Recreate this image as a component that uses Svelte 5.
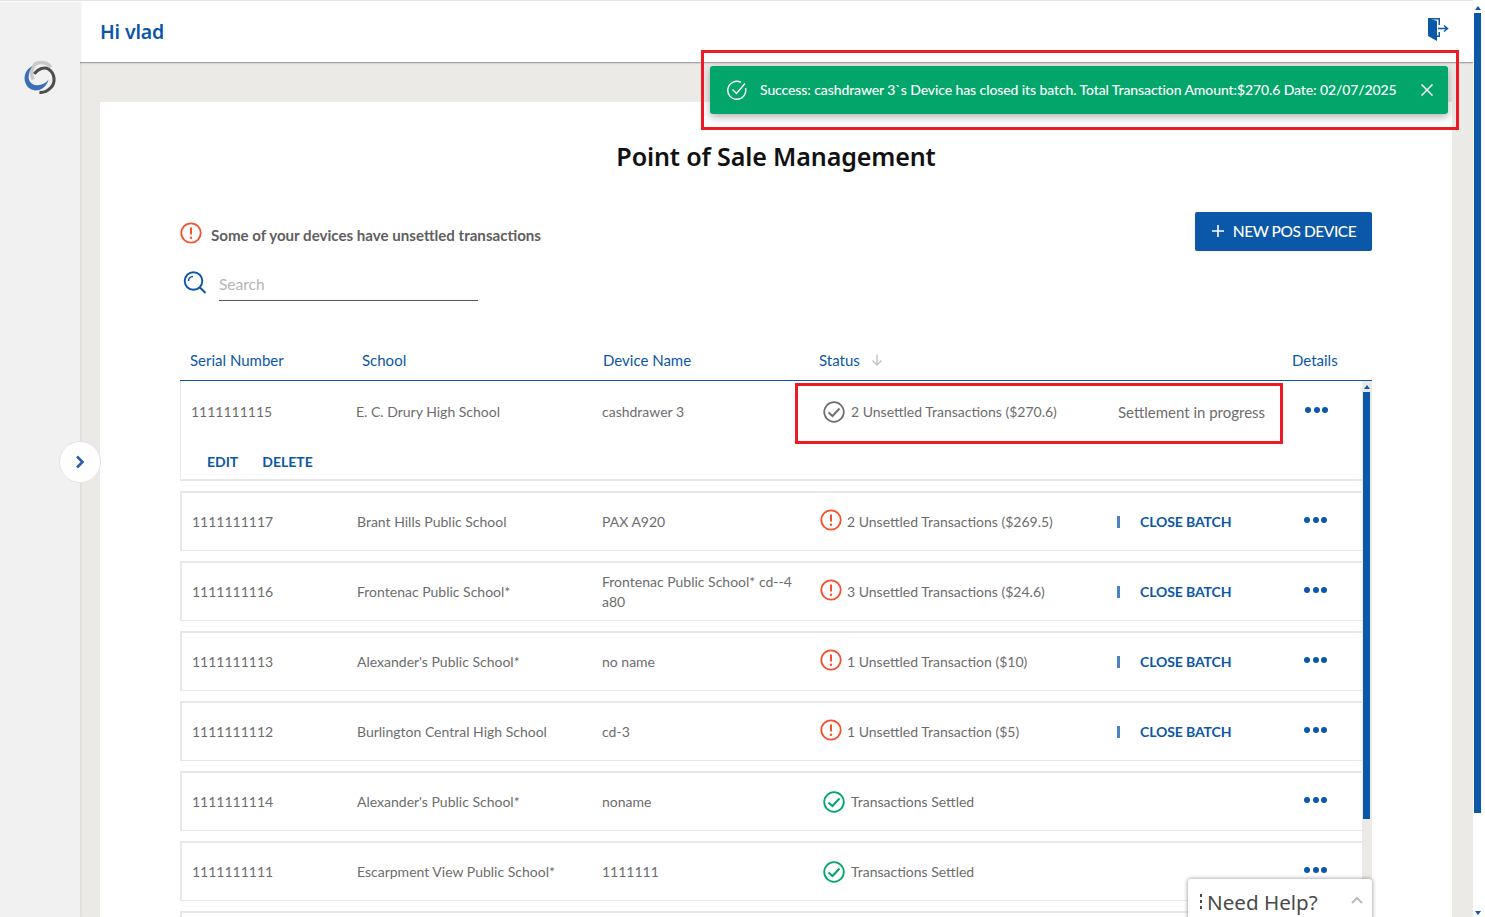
<script>
  const rows = [
    { serial: '1111111117', school: 'Brant Hills Public School', device: 'PAX A920', status: '2 Unsettled Transactions ($269.5)', batch: true },
    { serial: '1111111116', school: 'Frontenac Public School*', device: 'Frontenac Public School* cd--4 a80', status: '3 Unsettled Transactions ($24.6)', batch: true },
    { serial: '1111111113', school: "Alexander's Public School*", device: 'no name', status: '1 Unsettled Transaction ($10)', batch: true },
    { serial: '1111111112', school: 'Burlington Central High School', device: 'cd-3', status: '1 Unsettled Transaction ($5)', batch: true },
    { serial: '1111111114', school: "Alexander's Public School*", device: 'noname', status: 'Transactions Settled', batch: false },
    { serial: '1111111111', school: 'Escarpment View Public School*', device: '1111111', status: 'Transactions Settled', batch: false }
  ];
</script>

<div class="page">
  <aside class="side">
    <svg class="logo" viewBox="0 0 34 34" width="35" height="35" fill="none">
      <path d="M9 18C5 10 9 1.500 16 1.500C20 1.500 24 3 26 6" stroke="#c9c9c9" stroke-width="3.500" />
      <path d="M10 12.500C14 7 20 5.500 24 8C30 12 31 21 26 26C23 29 19 31 15 30.500" stroke="#4d4d4d" stroke-width="3" />
      <path d="M8 5C2 8 -0.500 14 1 20C3 27 8 29 13 28.500C18 28 22 24 24 18C21 22 16 24 12 23.500C8 23 4.500 20 4.500 16C4.500 12 6 8 8 5Z" fill="#3a6fb5" />
    </svg>
  </aside>

  <div class="main">
    <header class="top">
      <span class="hi">Hi vlad</span>
      <svg class="exit" viewBox="0 0 22 23" width="22" height="23">
        <path d="M1 0L10 3V23L1 18Z" fill="#0b57a8" />
        <path d="M1 0H13V7H11.500V1.500H1Z" fill="#0b57a8" />
        <path d="M11.500 14H13V19H10V17.500H11.500Z" fill="#0b57a8" />
        <path d="M11 10.500H20.500M17 7.500L20.500 10.500L17 13.500" fill="none" stroke="#0b57a8" stroke-width="1.500" />
      </svg>
    </header>

    <div class="body">
      <section class="card">
        <h1>Point of Sale Management</h1>

        <div class="tools">
          <div class="left-tools">
            <div class="warn-line">
              <svg class="alert" viewBox="0 0 22 22" width="22" height="22">
                <circle cx="11" cy="11" r="9.700" fill="none" stroke="#f4512c" stroke-width="1.800" />
                <path d="M11 5.500V12.500" stroke="#f4512c" stroke-width="2" />
                <circle cx="11" cy="15.800" r="1.200" fill="#f4512c" />
              </svg>
              <span>Some of your devices have unsettled transactions</span>
            </div>
            <div class="search">
              <svg viewBox="0 0 24 24" width="24" height="24" fill="none" stroke="#0b57a8">
                <circle cx="10.500" cy="10" r="8.800" stroke-width="1.900" />
                <path d="M5.500 10C5.500 7.500 7.500 5.500 10 5.500" stroke-width="1.600" />
                <path d="M17 16.500L22.500 22" stroke-width="2" />
              </svg>
              <div class="field">Search</div>
            </div>
          </div>
          <button class="new">
            <svg viewBox="0 0 14 14" width="14" height="14"><path d="M7 1V13M1 7H13" stroke="#fff" stroke-width="1.600" /></svg>
            <span>NEW POS DEVICE</span>
          </button>
        </div>

        <div class="head">
          <span class="h1">Serial Number</span>
          <span class="h2">School</span>
          <span class="h3">Device Name</span>
          <span class="h4">Status
            <svg viewBox="0 0 12 12" width="12" height="12" fill="none" stroke="#c4c4c4" stroke-width="1.400"><path d="M6 0.500V11M1.500 6.500L6 11L10.500 6.500" /></svg>
          </span>
          <span class="h5">Details</span>
        </div>

        <div class="list">
          <div class="rows">
            <div class="open">
              <div class="open-row">
                <span>1111111115</span>
                <span>E. C. Drury High School</span>
                <span>cashdrawer 3</span>
                <span class="st">
                  <svg viewBox="0 0 22 22" width="22" height="22" fill="none" stroke="#6f6f6f">
                    <circle cx="11" cy="11" r="9.800" stroke-width="1.700" />
                    <path d="M5.500 11.500L9.500 15L16.500 7.500" stroke-width="2" />
                  </svg>
                  2 Unsettled Transactions ($270.6)
                </span>
                <span class="prog">Settlement in progress</span>
                <span class="dots"><i></i><i></i><i></i></span>
              </div>
              <div class="acts"><span>EDIT</span><span>DELETE</span></div>
            </div>

            {#each rows as r}
              <div class="row">
                <span>{r.serial}</span>
                <span>{r.school}</span>
                <span class="dev">{r.device}</span>
                {#if r.batch}
                  <span class="st un">
                    <svg class="up" viewBox="0 0 22 22" width="22" height="22">
                      <circle cx="11" cy="11" r="9.700" fill="none" stroke="#f4512c" stroke-width="1.800" />
                      <path d="M11 5.500V12.500" stroke="#f4512c" stroke-width="2" />
                      <circle cx="11" cy="15.800" r="1.200" fill="#f4512c" />
                    </svg>
                    {r.status}
                  </span>
                  <span class="close"><b></b>CLOSE BATCH</span>
                {:else}
                  <span class="st ok">
                    <svg viewBox="0 0 22 22" width="22" height="22" fill="none" stroke="#03a66a">
                      <circle cx="11" cy="11" r="9.800" stroke-width="1.800" />
                      <path d="M5.500 11.500L9.500 15L16.500 7.500" stroke-width="2" />
                    </svg>
                    {r.status}
                  </span>
                  <span></span>
                {/if}
                <span class="dots"><i></i><i></i><i></i></span>
              </div>
            {/each}
            <div class="row stub"></div>
          </div>
          <div class="bar">
            <em></em>
            <u></u>
          </div>
        </div>
      </section>
    </div>
  </div>

  <div class="pagebar"><em></em><u></u><s></s></div>

  <div class="toast">
    <svg viewBox="0 0 20 20" width="20" height="20" fill="none" stroke="#fff" stroke-width="1.400">
      <path d="M14 2.300A9 9 0 1 0 18.500 8" />
      <path d="M5.500 9.500L9.500 13.500L18 3.500" />
    </svg>
    <span>Success: cashdrawer 3`s Device has closed its batch. Total Transaction Amount:$270.6 Date: 02/07/2025</span>
    <svg class="x" viewBox="0 0 12 12" width="12" height="12" stroke="#fff" stroke-width="1.500"><path d="M0.500 0.500L11.500 11.500M11.500 0.500L0.500 11.500" /></svg>
  </div>

  <div class="mark m1"></div>
  <div class="mark m2"></div>

  <button class="toggle" aria-label="expand">
    <svg viewBox="0 0 10 14" width="10" height="14" fill="none" stroke="#2b5fa8" stroke-width="2.600"><path d="M2 1.500L7.500 7L2 12.500" /></svg>
  </button>

  <div class="help">
    <span class="grip"><i></i><i></i><i></i></span>
    <span class="help-t">Need Help?</span>
    <svg viewBox="0 0 12 8" width="12" height="8" fill="none" stroke="#bdbdbd" stroke-width="2.200"><path d="M1 7L6 2L11 7" /></svg>
  </div>
</div>

<style>
  :global(body) { margin: 0; overflow: hidden; font-family: Lato, "Liberation Sans", sans-serif; }
  .page { position: relative; width: 1485px; height: 917px; overflow: hidden; display: flex; padding-top: 2px; box-sizing: border-box; background: #fff; }
  .page::before { content: ""; position: absolute; left: 0; top: 0; width: 1473px; height: 1px; background: #e6e6e6; }
  .side { width: 80px; flex: none; background: #f1f1f1; box-shadow: 1px 0 2px rgba(0,0,0,.08); z-index: 1; padding: 59px 0 0 24px; box-sizing: border-box; }
  .logo { display: block; overflow: visible; }
  .main { width: 1393px; flex: none; display: flex; flex-direction: column; background: #ebeae7; }
  .top { height: 61px; flex: none; box-sizing: border-box; background: #fff; border-bottom: 1px solid #a4a4a0; box-shadow: 0 1px 1px rgba(0,0,0,.08); display: flex; align-items: center; justify-content: space-between; padding: 0 24px 0 20px; }
  .hi { font-family: "Noto Sans", sans-serif; font-size: 19.5px; font-weight: 600; letter-spacing: -.15px; color: #0b57a8; margin-top: -2px; }
  .exit { margin-top: -6px; }
  .body { flex: 1; min-height: 0; padding: 39px 21px 0 20px; }
  .card { height: 100%; background: #fff; padding: 0 80px; box-sizing: border-box; }
  h1 { margin: 0; padding: 38px 0 40px; height: 32px; text-align: center; font-family: "Noto Sans", sans-serif; font-size: 25.100px; line-height: 32px; font-weight: 600; color: #111; letter-spacing: -.15px; }
  .tools { display: flex; justify-content: space-between; align-items: flex-start; height: 140px; }
  .warn-line { display: flex; align-items: center; gap: 9px; font-size: 15.100px; color: #5f5f5f; height: 22px; margin-top: 10px; }
  .warn-line span { position: relative; top: 2px; font-weight: 700; }
  .search { display: flex; align-items: flex-start; gap: 12px; margin: 27px 0 0 3px; color: #b5b5b5; }
  .field { width: 259px; height: 29px; border-bottom: 1px solid #555; font-size: 15.500px; line-height: 26px; }
  .new { width: 177px; height: 39px; border: 0; border-radius: 2px; background: #0b57a8; color: #fff; font-family: inherit; font-size: 15.500px; font-weight: 500; letter-spacing: -.45px; display: flex; align-items: center; justify-content: center; gap: 8px; padding: 0 0 1px; }
  .head { position: relative; height: 28px; border-bottom: 1px solid #0b57a8; color: #0b57a8; font-size: 15px; line-height: 18px; }
  .head span { position: absolute; top: -1px; }
  .h1 { left: 10px; } .h2 { left: 182px; } .h3 { left: 423px; } .h4 { left: 639px; } .h5 { left: 1112px; }
  .h4 svg { margin-left: 7px; }
  .list { display: flex; height: 600px; }
  .rows { width: 1182px; flex: none; overflow: hidden; font-size: 14px; color: #6d6d6d; }
  .open { height: 100px; box-sizing: border-box; border-left: 1px solid #e8e8e8; border-bottom: 2px solid #e8e8e8; margin-bottom: 10px; }
  .open-row { display: grid; grid-template-columns: 165px 246px 221px 295px 187px 1fr; align-items: center; height: 61px; padding-left: 10px; }
  .st { display: flex; align-items: center; gap: 6px; }
  .prog { font-size: 15px; }
  .open-row .prog { margin-top: 1px; }
  .acts { display: flex; gap: 24px; padding: 11px 0 0 26px; font-size: 14px; font-weight: 700; color: #0b57a8; }
  .row { display: grid; grid-template-columns: 165px 245px 218px 297px 187px 1fr; align-items: center; height: 60px; box-sizing: border-box; border: 2px solid #e8e8e8; border-width: 2px 0 1px 2px; margin-bottom: 10px; padding-left: 10px; }
  .dev { line-height: 20px; padding-right: 20px; }
  .st.un { gap: 5px; }
  .st.ok { gap: 6px; padding-left: 3px; }
  .up { margin-top: -3px; }
  .close { position: relative; padding-left: 23px; font-weight: 700; color: #0b57a8; letter-spacing: -.1px; }
  .close b { position: absolute; left: 0; top: 3px; width: 3px; height: 12px; background: #4c82c0; }
  .dots { display: flex; gap: 2.500px; margin-top: -4px; }
  .dots i { width: 6px; height: 6px; border-radius: 50%; background: #0b57a8; }
  .bar { position: relative; width: 10px; flex: none; background: #ebeae7; }
  .bar em { position: absolute; left: 2px; top: 4px; width: 0; height: 0; border: 3px solid transparent; border-top: 0; border-bottom: 4px solid #0b57a8; }
  .bar u { position: absolute; left: 1px; top: 11px; width: 7px; height: 427px; background: #0b57a8; }
  .pagebar { position: absolute; right: 0; top: 0; width: 12px; height: 917px; background: #fff; }
  .pagebar u { position: absolute; left: 1px; top: 13px; width: 7px; height: 800px; background: #0b57a8; }
  .pagebar em { position: absolute; left: 2px; top: 6px; width: 0; height: 0; border: 3px solid transparent; border-top: 0; border-bottom: 4px solid #0b57a8; }
  .pagebar s { position: absolute; left: 2px; bottom: 2px; width: 0; height: 0; border: 3px solid transparent; border-bottom: 0; border-top: 4px solid #0b57a8; }
  .toast { position: absolute; left: 710px; top: 66px; width: 738px; height: 48px; box-sizing: border-box; background: #03a66a; border-radius: 3px; box-shadow: 0 3px 8px rgba(0,0,0,.3); color: #fff; display: flex; align-items: center; padding: 0 15px 0 17px; font-size: 14px; font-weight: 500; letter-spacing: -.1px; }
  .toast span { margin: -2px 0 0 13px; flex: 1; white-space: nowrap; }
  .mark { position: absolute; border: 3px solid #ed1c24; box-sizing: border-box; }
  .m1 { left: 701px; top: 50px; width: 758px; height: 80px; }
  .m2 { left: 795px; top: 383px; width: 488px; height: 61px; }
  .toggle { position: absolute; z-index: 2; left: 59px; top: 441px; width: 42px; height: 42px; box-sizing: border-box; border-radius: 50%; border: 1px solid #e4e4e4; background: #fff; display: flex; align-items: center; justify-content: center; padding: 0; }
  .help { position: absolute; left: 1188px; top: 879px; width: 184px; height: 50px; box-sizing: border-box; background: #fff; border-radius: 3px; box-shadow: 0 0 4px rgba(0,0,0,.45); display: flex; align-items: flex-start; padding: 8px 9px 0 12px; color: #4a4a4a; }
  .grip { display: flex; flex-direction: column; gap: 3px; margin: 7px 5px 0 0; }
  .grip i { width: 2px; height: 3px; background: #4a4a4a; }
  .help-t { font-family: "Noto Sans", sans-serif; font-size: 20.600px; line-height: 30px; flex: 1; }
  .help svg { margin-top: 9px; }
</style>
